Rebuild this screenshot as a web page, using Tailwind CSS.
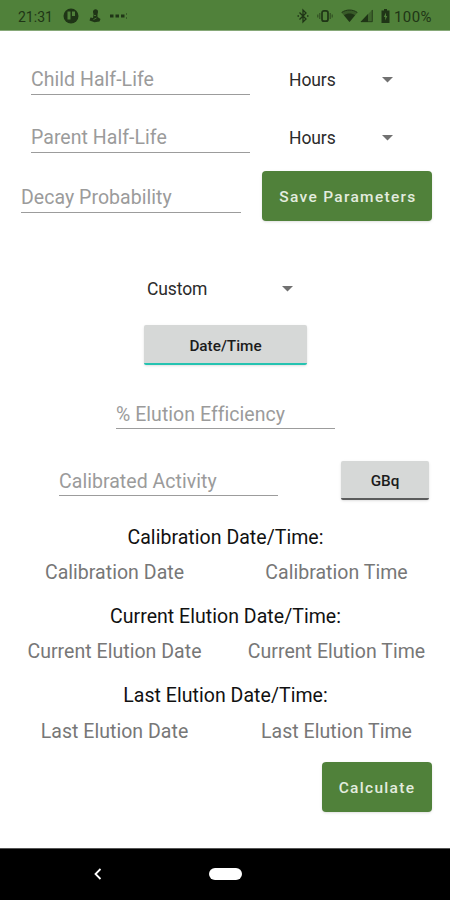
<!DOCTYPE html>
<html lang="en">
<head>
    <meta charset="UTF-8">
    <meta name="viewport" content="width=device-width, initial-scale=1.0">
    <title>Elution Calculator</title>
    <script src="https://cdn.jsdelivr.net/npm/@tailwindcss/browser@4"></script>
</head>
<body class="bg-white font-['Roboto',sans-serif]">
    <div class="w-[450px] h-[900px] flex flex-col overflow-hidden">
        <!-- Status bar -->
        <header class="h-[31px] shrink-0 bg-[#50813a] border-b border-[#86a878] flex items-center pl-[18px] pr-[17px] pt-[2px] text-[#1f3516]">
            <span class="w-[45px] pt-[1px] text-[14px] leading-4 whitespace-nowrap">21:31</span>
            <svg class="w-4 h-4" viewBox="0 0 16 16">
                <circle cx="8" cy="8" r="7.5" fill="currentColor"/>
                <path d="M4.5 3.5h3v8h-3zM9 3.5h3v4.5H9z" fill="#50813a"/>
            </svg>
            <svg class="w-3 h-4 ml-[10px]" viewBox="0 0 12 16">
                <path d="M4 4c0-4 5.500-3.500 5 0L8.500 6.500v2.500l3 2-1 2.500-5 .8-5-1.800 1-3 2.500.5.5-3.500z" fill="currentColor"/>
                <path d="M4.500 11.500l3-1.500M5 7.500h2" stroke="#50813a" stroke-width=".8"/>
            </svg>
            <svg class="w-5 h-4 ml-[9px]" viewBox="0 0 20 16" fill="currentColor">
                <path d="M0 6.5h3.5v3H0zM5.5 6.5H9v3H5.500zM11 6.500h3.500v3H11z"/>
                <path d="M16 5h1v2h-1zM16 9h1v2h-1z" opacity=".5"/>
            </svg>
            <div class="ml-auto flex items-center">
                <svg class="w-3 h-4" viewBox="0 0 12 16" fill="none" stroke="currentColor" stroke-width="1.300">
                    <path d="M2.500 4.500l6.500 6.500-3 3V2l3 3-6.500 6.500"/>
                    <path d="M0.500 7.200h1.500v1.500H.5zM10 7.200h1.500v1.500H10z" fill="currentColor" stroke="none"/>
                </svg>
                <svg class="w-4 h-4 ml-[8px]" viewBox="0 0 16 16" fill="none" stroke="currentColor">
                    <rect x="5" y="2.800" width="6" height="10.400" rx="2" stroke-width="1.700"/>
                    <path d="M2.800 5v6M13.200 5v6M.8 6.500v3M15.200 6.500v3" stroke-width="1.100" opacity=".7"/>
                </svg>
                <svg class="w-[17px] h-4 ml-[8px]" viewBox="0 0 17 16">
                    <path d="M8.500 14L.5 4.500C5 1 12 1 16.500 4.500z" fill="currentColor" opacity=".5"/>
                    <path d="M8.500 14L3 7.300c3-2.400 8-2.400 11 0z" fill="currentColor"/>
                    <path d="M.7 4.500C5 1.200 12 1.200 16.300 4.500" fill="none" stroke="currentColor"/>
                </svg>
                <svg class="w-[13px] h-4 ml-[2px]" viewBox="0 0 13 16">
                    <path d="M12.500 1.500v12.500H.5z" fill="currentColor" opacity=".35"/>
                    <path d="M8 6v8H.5z" fill="currentColor"/>
                    <path d="M12.300 2v11.700H1" fill="none" stroke="currentColor" stroke-width=".8"/>
                </svg>
                <svg class="w-[9px] h-4 ml-[8px]" viewBox="0 0 9 16">
                    <path d="M3 1h3v1.500h2.500V15H.5V2.500H3z" fill="currentColor"/>
                    <path d="M5 4.500L2.800 9h1.400v3.500L6.300 8H5z" fill="#50813a"/>
                </svg>
                <span class="w-[39px] ml-[4px] pt-[2px] text-[15px] leading-4 tracking-[0.4px] whitespace-nowrap">100%</span>
            </div>
        </header>

        <main class="h-[817px] shrink-0 flex flex-col">
            <!-- Decay parameters -->
            <div class="mt-[33px] h-[31px] flex pl-[31px]">
                <div class="w-[219px] border-b border-[#9c9c9c] text-[19.5px] leading-[32px] tracking-[0.04px] text-[#9b9b9b]">Child Half-Life</div>
                <div class="ml-[39px] w-[104px] h-[31px] flex items-center justify-between text-[17.5px] leading-[28px] tracking-[-0.1px] text-[#2b2b2b]">
                    Hours
                    <svg class="w-[11px] h-[6px]" viewBox="0 0 11 6"><path d="M0 0h11L5.500 5.500z" fill="#717171"/></svg>
                </div>
            </div>
            <div class="mt-[27px] h-[31px] flex pl-[31px]">
                <div class="w-[219px] border-b border-[#9c9c9c] text-[19.5px] leading-[32px] tracking-[0.04px] text-[#9b9b9b]">Parent Half-Life</div>
                <div class="ml-[39px] w-[104px] h-[31px] flex items-center justify-between text-[17.5px] leading-[28px] tracking-[-0.1px] text-[#2b2b2b]">
                    Hours
                    <svg class="w-[11px] h-[6px]" viewBox="0 0 11 6"><path d="M0 0h11L5.500 5.500z" fill="#717171"/></svg>
                </div>
            </div>
            <div class="mt-[18px] h-[50px] flex items-start pl-[21px]">
                <div class="mt-[11px] w-[220px] h-[31px] border-b border-[#9c9c9c] text-[19.5px] leading-[32px] tracking-[0.04px] text-[#9b9b9b]">Decay Probability</div>
                <button class="ml-[21px] w-[170px] h-[50px] pt-[3px] pl-[2px] rounded-[4px] bg-[#50813a] shadow-sm text-[15.5px] font-medium tracking-[1.300px] text-[#e3ecdf] whitespace-nowrap">Save Parameters</button>
            </div>

            <!-- Isotope and date -->
            <div class="mt-[53px] ml-[147px] w-[146px] h-[30px] flex items-center justify-between text-[17.5px] tracking-[-0.1px] text-[#2b2b2b]">
                Custom
                <svg class="w-[11px] h-[6px]" viewBox="0 0 11 6"><path d="M0 0h11L5.500 5.500z" fill="#717171"/></svg>
            </div>
            <button class="mt-[21px] ml-[144px] w-[163px] h-[40px] pt-[4px] rounded-[2px] border-b-2 border-[#25c3b1] bg-[#d6d8d7] shadow-sm text-[15.3px] font-medium text-[#1c1c1c]">Date/Time</button>
            <div class="mt-[33px] ml-[116px] w-[219px] h-[31px] border-b border-[#9c9c9c] text-[19.5px] leading-[33px] tracking-[0.04px] text-[#9b9b9b]">% Elution Efficiency</div>
            <div class="mt-[32px] h-[40px] flex items-start pl-[59px]">
                <div class="mt-[4px] w-[219px] h-[31px] border-b border-[#9c9c9c] text-[19.5px] leading-[34px] tracking-[0.04px] text-[#9b9b9b]">Calibrated Activity</div>
                <button class="ml-[63px] w-[88px] h-[39px] pt-[4px] rounded-[2px] border-b-2 border-[#5b5c5c] bg-[#d6d8d7] shadow-sm text-[15.3px] font-medium text-[#1c1c1c]">GBq</button>
            </div>

            <!-- Selected dates -->
            <div class="mt-[23px] text-[19.5px] leading-[28px] tracking-[0.04px] text-center">
                <h2 class="pl-[1px] text-[#111111]">Calibration Date/Time:</h2>
                <div class="mt-[7px] grid grid-cols-[219px_225px] pl-[5px] text-[#777777]">
                    <span>Calibration Date</span>
                    <span>Calibration Time</span>
                </div>
                <h2 class="mt-[16px] pl-[1px] text-[#111111]">Current Elution Date/Time:</h2>
                <div class="mt-[7px] grid grid-cols-[219px_225px] pl-[5px] text-[#777777]">
                    <span>Current Elution Date</span>
                    <span>Current Elution Time</span>
                </div>
                <h2 class="mt-[16px] pl-[1px] text-[#111111]">Last Elution Date/Time:</h2>
                <div class="mt-[8px] grid grid-cols-[219px_225px] pl-[5px] text-[#777777]">
                    <span>Last Elution Date</span>
                    <span>Last Elution Time</span>
                </div>
            </div>

            <button class="mt-[16px] ml-[322px] w-[110px] h-[50px] pt-[3px] rounded-[4px] bg-[#50813a] shadow-sm text-[15.5px] font-medium tracking-[1.300px] text-[#e3ecdf]">Calculate</button>
        </main>

        <!-- Navigation bar -->
        <nav class="h-[52px] shrink-0 bg-black border-t border-[#555555] flex items-center pl-[94px] pb-[1px]">
            <svg class="w-[8px] h-[12px]" viewBox="0 0 8 12" fill="none" stroke="#ffffff" stroke-width="1.800"><path d="M6.500 1L1.500 6l5 5"/></svg>
            <div class="ml-[107px] w-[33px] h-[12px] rounded-full bg-white"></div>
        </nav>
    </div>
</body>
</html>
